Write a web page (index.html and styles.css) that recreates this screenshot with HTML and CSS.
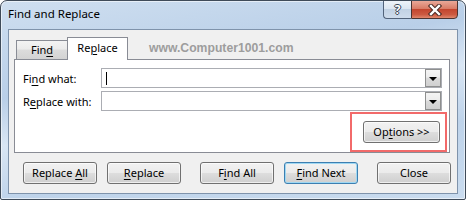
FILE: index.html
```html
<!DOCTYPE html>
<html lang="en">
<head>
    <meta charset="UTF-8">
    <title>Find and Replace</title>
    <link rel="stylesheet" href="styles.css">
</head>
<body>
    <div class="window">
        <div class="titlebar">
            <span class="title">Find and Replace</span>
            <div class="caption">
                <span class="cap-btn help">?</span>
                <span class="cap-btn close">
                    <svg width="16" height="12" viewBox="0 0 16 12">
                        <path d="M4 2 L12 10 M12 2 L4 10" stroke="#4a2a24" stroke-width="4.4" stroke-linecap="square"/>
                        <path d="M4 2 L12 10 M12 2 L4 10" stroke="#fff" stroke-width="2.4" stroke-linecap="square"/>
                    </svg>
                </span>
            </div>
        </div>

        <div class="client">
            <div class="tabs">
                <span class="tab">Fin<u>d</u></span>
                <span class="tab active">Re<u>p</u>lace</span>
                <span class="watermark">www.Computer1001.com</span>
            </div>

            <div class="panel">
                <div class="field">
                    <label>Fi<u>n</u>d what:</label>
                    <div class="combo">
                        <span class="caret"></span>
                        <span class="drop"><span class="arrow"></span></span>
                    </div>
                </div>
                <div class="field">
                    <label>R<u>e</u>place with:</label>
                    <div class="combo">
                        <span class="drop"><span class="arrow"></span></span>
                    </div>
                </div>
                <div class="options-row">
                    <div class="highlight">
                        <button class="btn options">Op<u>t</u>ions &gt;&gt;</button>
                    </div>
                </div>
            </div>

            <div class="actions">
                <button class="btn">Replace <u>A</u>ll</button>
                <button class="btn gap-s"><u>R</u>eplace</button>
                <button class="btn gap-l">F<u>i</u>nd All</button>
                <button class="btn gap-s default"><u>F</u>ind Next</button>
                <button class="btn gap-l">Close</button>
            </div>
        </div>
    </div>
</body>
</html>
```

FILE: styles.css
```css
body {
    margin: 0;
    font-family: "Noto Sans", sans-serif;
    font-size: 11px;
    color: #000;
}

u {
    text-decoration-thickness: 1px;
    text-underline-offset: 2px;
}

.window {
    width: 466px;
    height: 200px;
    box-sizing: border-box;
    border: 1px solid #3f4b59;
    border-radius: 7px 7px 2px 2px;
    background: linear-gradient(170deg, #cfdff0 0%, #b9cfe8 35%, #d9e6f4 52%, #bed3ea 72%, #cadcef 100%);
    box-shadow: inset 0 0 0 1px rgba(255, 255, 255, 0.55);
    display: flex;
    flex-direction: column;
    overflow: hidden;
}

/* title bar */
.titlebar {
    height: 28px;
    display: flex;
    align-items: flex-start;
}

.title {
    margin: 5px 0 0 7px;
    line-height: 16px;
    font-size: 11.5px;
}

.caption {
    margin: -1px 7px 0 auto;
    display: flex;
}

.cap-btn {
    height: 19px;
    box-sizing: border-box;
    display: flex;
    align-items: center;
    justify-content: center;
}

.help {
    width: 28px;
    border: 1px solid #52637a;
    border-right: none;
    border-radius: 0 0 0 4px;
    background: linear-gradient(#eef3f9 0%, #dce6f1 45%, #c2d2e4 50%, #cfdcec 100%);
    color: #fff;
    font-weight: bold;
    font-size: 12px;
    text-shadow: 1px 0 0 #3a4656, -1px 0 0 #3a4656, 0 1px 0 #3a4656, 0 -1px 0 #3a4656;
}

.close {
    width: 47px;
    border: 1px solid #4c3431;
    border-radius: 0 0 4px 0;
    background: linear-gradient(#eaa898 0%, #d97c67 45%, #c4462f 50%, #cc5a41 80%, #e1886d 100%);
}

/* client area */
.client {
    height: 165px;
    margin: 0 7px;
    box-sizing: border-box;
    border: 1px solid #7f93ab;
    background-color: #f0f0f0;
    display: flex;
    flex-direction: column;
}

.tabs {
    margin-top: 7px;
    height: 22px;
    padding-left: 7px;
    display: flex;
    align-items: flex-end;
}

.tab {
    box-sizing: border-box;
    border: 1px solid #898c95;
    border-bottom: none;
    text-align: center;
}

.tab:first-child {
    width: 52px;
    height: 19px;
    line-height: 18px;
    background: linear-gradient(#f3f3f3 0%, #ebebeb 45%, #dcdcdc 50%, #d3d3d3 100%);
}

.tab.active {
    width: 61px;
    height: 23px;
    margin-left: -1px;
    margin-bottom: -1px;
    line-height: 19px;
    background-color: #fff;
    position: relative;
    z-index: 1;
}

.watermark {
    align-self: flex-start;
    margin: 4px 0 0 21px;
    font-family: "Liberation Sans", Arial, sans-serif;
    font-weight: bold;
    font-size: 12.2px;
    line-height: 14px;
    color: #9d9d9d;
}

.panel {
    height: 94px;
    margin: 0 7px 0 5px;
    box-sizing: border-box;
    border: 1px solid #898c95;
    background-color: #fff;
    padding: 8px 0 0 8px;
    display: flex;
    flex-direction: column;
    gap: 3px;
}

.field {
    height: 20px;
    margin-right: 7px;
    display: flex;
    align-items: center;
}

.field label {
    width: 78px;
}

.combo {
    flex: 1;
    height: 20px;
    box-sizing: border-box;
    border: 1px solid #abadb3;
    padding-left: 4px;
    display: flex;
    align-items: center;
}

.caret {
    width: 1px;
    height: 13px;
    background-color: #000;
}

.drop {
    width: 16px;
    height: 18px;
    margin-left: auto;
    box-sizing: border-box;
    border: 1px solid #8e8f8f;
    background: linear-gradient(#f4f4f4 0%, #ececec 45%, #dadada 50%, #d0d0d0 100%);
    display: flex;
    align-items: center;
    justify-content: center;
}

.arrow {
    width: 0;
    height: 0;
    margin-top: 1px;
    border-left: 4px solid transparent;
    border-right: 4px solid transparent;
    border-top: 4px solid #000;
}

.options-row {
    margin-top: -2px;
    padding-right: 2px;
    display: flex;
    justify-content: flex-end;
}

.highlight {
    width: 97px;
    height: 40px;
    box-sizing: border-box;
    border: 2px solid #f26a6a;
    padding: 7px 0 0 11px;
}

/* buttons */
.btn {
    width: 74px;
    height: 22px;
    box-sizing: border-box;
    padding: 0;
    border: 1px solid #707070;
    border-radius: 3px;
    background: linear-gradient(#f2f2f2 0%, #ebebeb 48%, #dddddd 52%, #cfcfcf 100%);
    box-shadow: inset 0 0 0 1px rgba(255, 255, 255, 0.65);
    font-family: inherit;
    font-size: 11px;
    line-height: 20px;
    color: #000;
}

.btn.options {
    width: 77px;
}

.btn.default {
    border-color: #3c7fb1;
    box-shadow: inset 0 0 0 1px #9fd8f3;
}

.actions {
    margin-top: 9px;
    padding-left: 14px;
    display: flex;
}

.gap-s {
    margin-left: 10px;
}

.gap-l {
    margin-left: 19px;
}
```
